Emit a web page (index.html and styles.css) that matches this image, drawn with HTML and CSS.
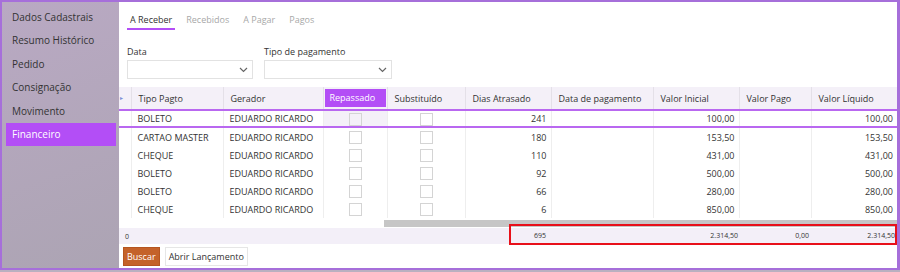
FILE: index.html
```html
<!DOCTYPE html>
<html lang="pt">
<head>
<meta charset="utf-8"/>
<link rel="stylesheet" href="styles.css">
</head>
<body>
<div id="frame">
    <div id="sidebar">
        <div class="navitem">Dados Cadastrais</div>
        <div class="navitem">Resumo Histórico</div>
        <div class="navitem">Pedido</div>
        <div class="navitem">Consignação</div>
        <div class="navitem">Movimento</div>
        <div class="navitem active">Financeiro</div>
    </div>
    <div id="main">
        <div id="tabs">
            <div class="tab active">A Receber</div>
            <div class="tab">Recebidos</div>
            <div class="tab">A Pagar</div>
            <div class="tab">Pagos</div>
        </div>
        <div id="filters">
            <div class="field data">
                <div class="label">Data</div>
                <div class="select"><svg width="9" height="6" viewBox="0 0 9 6"><polyline points="1,1 4.5,4.5 8,1" fill="none" stroke="#666" stroke-width="1.2"/></svg></div>
            </div>
            <div class="field tipo">
                <div class="label">Tipo de pagamento</div>
                <div class="select"><svg width="9" height="6" viewBox="0 0 9 6"><polyline points="1,1 4.5,4.5 8,1" fill="none" stroke="#666" stroke-width="1.2"/></svg></div>
            </div>
        </div>
        <div id="grid">
            <table>
                <colgroup>
                    <col style="width:12px"><col style="width:92px"><col style="width:100px"><col style="width:64px"><col style="width:78px">
                    <col style="width:86px"><col style="width:102px"><col style="width:86px"><col style="width:72px"><col style="width:86px">
                </colgroup>
                <thead>
                    <tr>
                        <th class="ind">&#9656;</th>
                        <th>Tipo Pagto</th>
                        <th>Gerador</th>
                        <th class="hl"><span>Repassado</span></th>
                        <th>Substituído</th>
                        <th>Dias Atrasado</th>
                        <th>Data de pagamento</th>
                        <th>Valor Inicial</th>
                        <th>Valor Pago</th>
                        <th>Valor Líquido</th>
                    </tr>
                </thead>
                <tbody>
                    <tr class="sel">
                        <td></td><td>BOLETO</td><td>EDUARDO RICARDO</td><td class="chk cur"><i></i></td><td class="chk"><i></i></td>
                        <td class="num">241</td><td></td><td class="num">100,00</td><td></td><td class="num">100,00</td>
                    </tr>
                    <tr>
                        <td></td><td>CARTAO MASTER</td><td>EDUARDO RICARDO</td><td class="chk"><i></i></td><td class="chk"><i></i></td>
                        <td class="num">180</td><td></td><td class="num">153,50</td><td></td><td class="num">153,50</td>
                    </tr>
                    <tr>
                        <td></td><td>CHEQUE</td><td>EDUARDO RICARDO</td><td class="chk"><i></i></td><td class="chk"><i></i></td>
                        <td class="num">110</td><td></td><td class="num">431,00</td><td></td><td class="num">431,00</td>
                    </tr>
                    <tr>
                        <td></td><td>BOLETO</td><td>EDUARDO RICARDO</td><td class="chk"><i></i></td><td class="chk"><i></i></td>
                        <td class="num">92</td><td></td><td class="num">500,00</td><td></td><td class="num">500,00</td>
                    </tr>
                    <tr>
                        <td></td><td>BOLETO</td><td>EDUARDO RICARDO</td><td class="chk"><i></i></td><td class="chk"><i></i></td>
                        <td class="num">66</td><td></td><td class="num">280,00</td><td></td><td class="num">280,00</td>
                    </tr>
                    <tr>
                        <td></td><td>CHEQUE</td><td>EDUARDO RICARDO</td><td class="chk"><i></i></td><td class="chk"><i></i></td>
                        <td class="num">6</td><td></td><td class="num">850,00</td><td></td><td class="num">850,00</td>
                    </tr>
                </tbody>
            </table>
            <div id="hscroll"><div class="thumb"></div></div>
            <div id="summary">
                <div class="cnt">0</div>
                <div class="s dias">695</div>
                <div class="s ini">2.314,50</div>
                <div class="s pago">0,00</div>
                <div class="s liq">2.314,50</div>
            </div>
            <div id="mark"></div>
        </div>
        <div id="actions">
            <button class="buscar">Buscar</button>
            <button class="abrir">Abrir Lançamento</button>
        </div>
    </div>
</div>
</body>
</html>
```

FILE: styles.css
```css
html {
    font-family: 'Open Sans', 'Noto Sans', sans-serif;
    font-size: 9px;
    color: #333;
}
body {
    margin: 0;
    padding: 0;
    background: #b9b0c0;
}
#frame {
    display: flex;
    width: 895px;
    height: 266px;
    border: 2px solid #a66fda;
    border-right-width: 3px;
    background: #fff;
}
#sidebar {
    width: 110px;
    padding: 4px 3px 4px 4px;
    background: linear-gradient(160deg, #b9a9c3, #aca4b3);
    flex-shrink: 0;
    font-size: 10px;
}
.navitem {
    height: 23.4px;
    line-height: 23.4px;
    padding-left: 6px;
    color: #333;
}
.navitem.active {
    background: #b34ef6;
    color: #fff;
}
#main {
    flex: 1;
    display: flex;
    flex-direction: column;
    min-width: 0;
}
#tabs {
    display: flex;
    gap: 8px;
    padding: 6px 8px 0;
}
.tab {
    padding: 5px 3px 1px;
    line-height: 14px;
    color: #a8a8a8;
    border-bottom: 2.5px solid transparent;
}
.tab.active {
    color: #333;
    border-bottom-color: #b34ef6;
}
#filters {
    display: flex;
    gap: 11px;
    padding: 15px 8px 0;
}
.label {
    line-height: 14px;
    margin-bottom: 1px;
}
.select {
    height: 17px;
    border: 1px solid #e2e2e2;
    display: flex;
    align-items: center;
    justify-content: flex-end;
    padding-right: 4px;
}
.data .select { width: 120px; }
.tipo .select { width: 122px; }
#grid {
    position: relative;
    margin-top: 8px;
}
table {
    table-layout: fixed;
    width: 778px;
    border-collapse: collapse;
}
th {
    height: 20px;
    padding: 0 0 0 7px;
    background: #f4f0f8;
    font-weight: normal;
    text-align: left;
    border-left: 1px solid #e4e0e8;
    white-space: nowrap;
    overflow: hidden;
}
th.ind {
    padding: 0 0 0 1px;
    border-left: none;
    color: #7a8fd6;
    font-size: 6px;
}
th.hl {
    padding: 1px;
}
th.hl span {
    display: block;
    height: 18px;
    line-height: 18px;
    padding-left: 5px;
    background: #b34ef6;
    color: #fff;
}
td {
    height: 18px;
    padding: 0 0 0 6px;
    border-left: 1px solid #eeeeee;
    white-space: nowrap;
    overflow: hidden;
}
td:first-child {
    border-left: none;
}
td.num {
    text-align: right;
    padding: 0 4px 0 0;
}
td.chk {
    padding: 0;
    text-align: center;
}
td.chk i {
    display: inline-block;
    width: 11px;
    height: 11px;
    border: 1px solid #d4d4d4;
    vertical-align: middle;
    background: #fff;
}
td.cur {
    background: #f4f0f8;
}
td.cur i {
    background: #f4f0f8;
}
tr.sel td {
    height: 15px;
    border-top: 2px solid #b968f0;
    border-bottom: 2px solid #b968f0;
}
#hscroll {
    height: 10px;
    padding-left: 265px;
    display: flex;
    align-items: center;
}
.thumb {
    flex: 1;
    height: 7px;
    background: #c6c6c6;
}
#summary {
    position: relative;
    height: 16px;
    background: #f3eff8;
    font-size: 7px;
    display: flex;
    align-items: center;
}
.cnt {
    padding-left: 6px;
}
.s {
    position: absolute;
    top: 0;
    line-height: 16px;
    text-align: right;
}
.dias { right: 351px; }
.ini { right: 159px; }
.pago { right: 88px; }
.liq { right: 2px; }
#mark {
    position: absolute;
    left: 390px;
    right: 0;
    bottom: -1px;
    height: 17px;
    border: 2px solid #e8101a;
}
#actions {
    display: flex;
    gap: 5px;
    padding: 3px 4px 0;
}
button {
    height: 19px;
    padding: 0 3px;
    font-family: 'Open Sans', 'Noto Sans', sans-serif;
    font-size: 9px;
    border-radius: 0;
}
.buscar {
    background: #c4622a;
    color: #fff;
    border: 1px solid #b55520;
}
.abrir {
    background: #fff;
    color: #333;
    border: 1px solid #e6e6e6;
}
```
